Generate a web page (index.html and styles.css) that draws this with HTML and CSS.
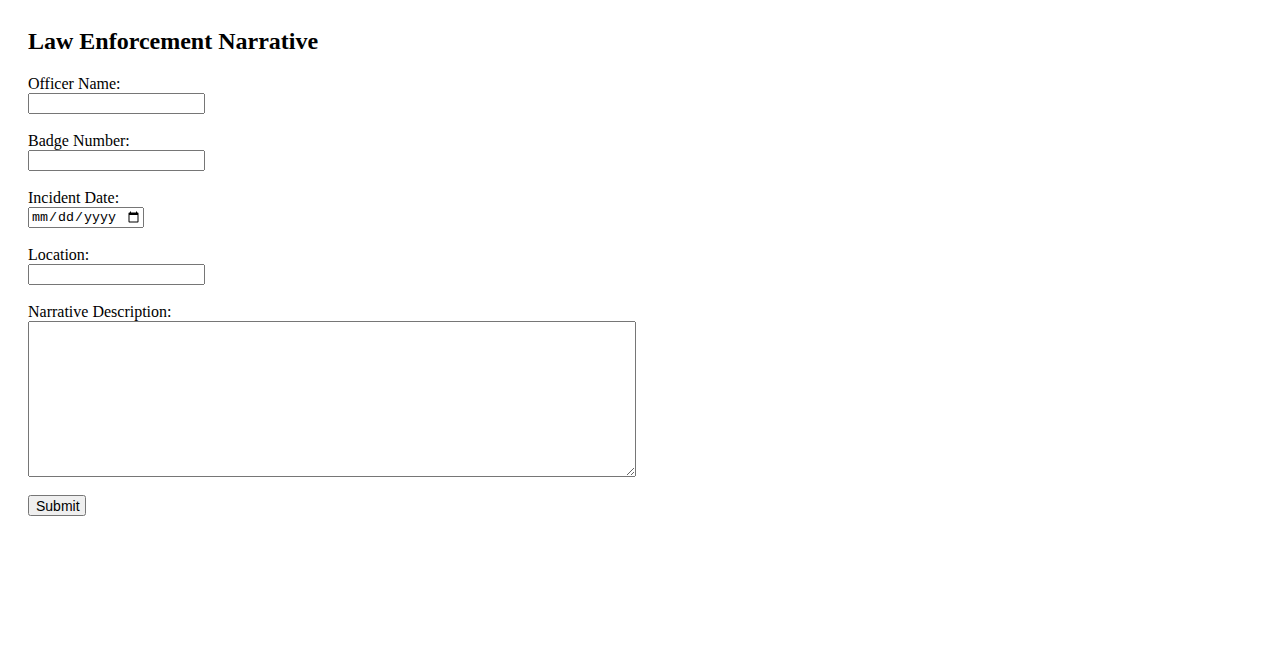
FILE: index.html
```html
<!DOCTYPE html>
<html lang="en">
<head>
<meta charset="utf-8">
<title>Law Enforcement Narrative</title>
<link rel="stylesheet" href="styles.css">
</head>
<body>
<h2 class="title">Law Enforcement Narrative</h2>
<form class="form">
  <div class="group">
    <label class="label" for="officer">Officer Name:</label>
    <input class="field" type="text" id="officer">
  </div>
  <div class="group">
    <label class="label" for="badge">Badge Number:</label>
    <input class="field" type="text" id="badge">
  </div>
  <div class="group">
    <label class="label" for="date">Incident Date:</label>
    <input class="date" type="date" id="date">
  </div>
  <div class="group">
    <label class="label" for="location">Location:</label>
    <input class="field" type="text" id="location">
  </div>
  <div class="group">
    <label class="label" for="narrative">Narrative Description:</label>
    <textarea class="area" id="narrative"></textarea>
  </div>
  <button class="submit" type="submit">Submit</button>
</form>
</body>
</html>
```
FILE: styles.css
```css
body {
  margin: 8px;
  padding: 20px;
  font-family: "Liberation Serif", "Times New Roman", serif;
  font-size: 16px;
  color: #000;
  background: #fff;
}
.title {
  margin: 0 0 19px;
  font-size: 24px;
  font-weight: bold;
}
.group {
  display: flex;
  flex-direction: column;
  align-items: flex-start;
  margin-bottom: 17px;
}
.label {
  display: block;
  line-height: 19px;
}
.field {
  box-sizing: border-box;
  width: 177px;
  height: 21px;
  margin: 0;
  font-family: "Liberation Sans", Arial, sans-serif;
  font-size: 13.33px;
}
.date {
  box-sizing: border-box;
  width: 116px;
  height: 21px;
  margin: 0;
  font-family: "Liberation Mono", "Courier New", monospace;
  font-size: 13.33px;
}
.area {
  box-sizing: border-box;
  width: 608px;
  height: 156px;
  margin: 0;
  font-family: "Liberation Mono", monospace;
  font-size: 13.33px;
}
.submit {
  box-sizing: border-box;
  height: 21px;
  width: 58px;
  margin: 1px 0 0;
  font-family: "Liberation Sans", Arial, sans-serif;
  font-size: 14px;
  padding: 1px 6px;
}
```
